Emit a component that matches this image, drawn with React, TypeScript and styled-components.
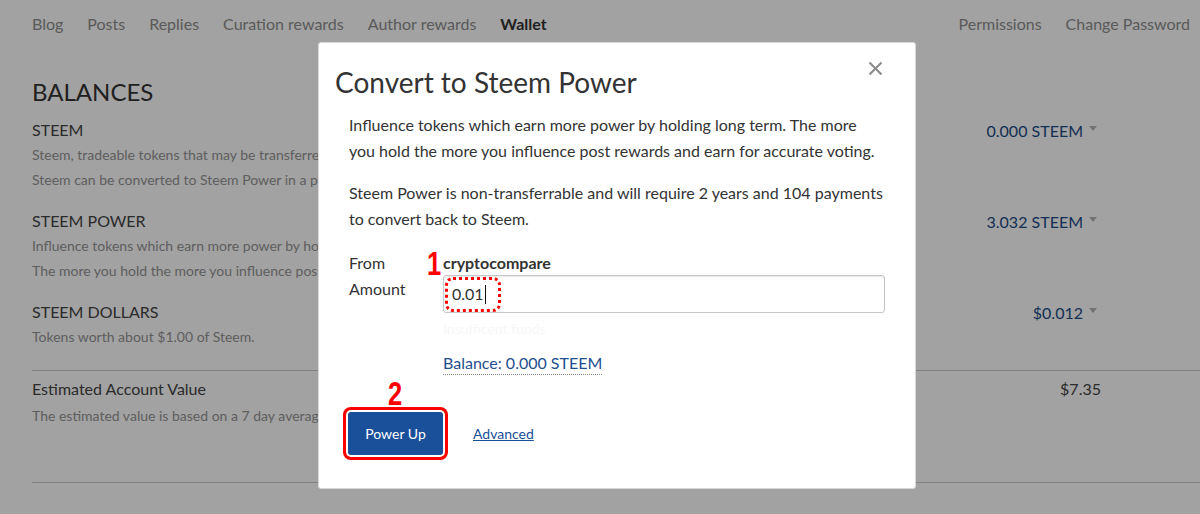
import styled, { createGlobalStyle } from 'styled-components'

const GlobalStyle = createGlobalStyle`
  html, body {
    margin: 0;
    padding: 0;
    background: #fff;
    font-family: Lato, "Open Sans", "Liberation Sans", sans-serif;
    color: #333;
  }
  * { box-sizing: border-box; }
`

interface Balance {
  label: string
  lines: string[]
  value: string
  dropdown: boolean
}

const balances: Balance[] = [
  {
    label: 'STEEM',
    lines: [
      'Steem, tradeable tokens that may be transferred anywhere at anytime.',
      'Steem can be converted to Steem Power in a process called powering up.'
    ],
    value: '0.000 STEEM',
    dropdown: true
  },
  {
    label: 'STEEM POWER',
    lines: [
      'Influence tokens which earn more power by holding long term.',
      'The more you hold the more you influence post rewards and earn for accurate voting.'
    ],
    value: '3.032 STEEM',
    dropdown: true
  },
  {
    label: 'STEEM DOLLARS',
    lines: ['Tokens worth about $1.00 of Steem.'],
    value: '$0.012',
    dropdown: true
  }
]

const leftTabs = ['Blog', 'Posts', 'Replies', 'Curation rewards', 'Author rewards', 'Wallet']
const rightTabs = ['Permissions', 'Change Password']

const App = () => {
  return <>
    <GlobalStyle />
    <Page>
      <Nav>
        <NavGroup>
          {leftTabs.map(t => <NavItem key={t} active={t === 'Wallet'}>{t}</NavItem>)}
        </NavGroup>
        <NavGroup>
          {rightTabs.map(t => <NavItem key={t} active={false}>{t}</NavItem>)}
        </NavGroup>
      </Nav>
      <Section>
        <Heading>BALANCES</Heading>
        {balances.map(b => <BalanceRow key={b.label}>
          <BalanceInfo>
            <BalanceLabel>{b.label}</BalanceLabel>
            {b.lines.map(l => <BalanceDesc key={l}>{l}</BalanceDesc>)}
          </BalanceInfo>
          <BalanceValue>
            <ValueLink>{b.value}</ValueLink>
            {b.dropdown && <Caret />}
          </BalanceValue>
        </BalanceRow>)}
        <EstimateRow>
          <BalanceInfo>
            <EstimateLabel>Estimated Account Value</EstimateLabel>
            <EstimateDesc>The estimated value is based on a 7 day average value of Steem in US dollars.</EstimateDesc>
          </BalanceInfo>
          <EstimateValue>$7.35</EstimateValue>
        </EstimateRow>
      </Section>
    </Page>
    <Overlay />
    <Modal>
      <CloseButton aria-label="Close">
        <svg width="15" height="15" viewBox="0 0 15 15">
          <path d="M1.5 1.5 L13.5 13.5 M13.5 1.5 L1.5 13.5" stroke="#8a8a8a" strokeWidth="2" />
        </svg>
      </CloseButton>
      <Title>Convert to Steem Power</Title>
      <ModalBody>
        <Paragraph>
          Influence tokens which earn more power by holding long term. The more<br />
          you hold the more you influence post rewards and earn for accurate voting.
        </Paragraph>
        <Paragraph>
          Steem Power is non-transferrable and will require 2 years and 104 payments<br />
          to convert back to Steem.
        </Paragraph>
        <FormRow>
          <FieldLabel>From</FieldLabel>
          <FieldValue>
            <Marker top={0} left={-16}>1</Marker>
            <Account>cryptocompare</Account>
          </FieldValue>
        </FormRow>
        <AmountRow>
          <AmountLabel>Amount</AmountLabel>
          <FieldValue>
            <InputBox>
              0.01<InputCaret />
              <DottedMark />
            </InputBox>
            <ErrorText>Insufficent funds</ErrorText>
            <BalanceLink>Balance: 0.000 STEEM</BalanceLink>
          </FieldValue>
        </AmountRow>
        <Actions>
          <ButtonWrap>
            <Marker top={-31} left={40}>2</Marker>
            <PrimaryButton>Power Up</PrimaryButton>
          </ButtonWrap>
          <AdvancedLink>Advanced</AdvancedLink>
        </Actions>
      </ModalBody>
    </Modal>
  </>
}

const Page = styled.div`
  width: 1200px;
  height: 514px;
  overflow: hidden;
`
const Nav = styled.nav`
  display: flex;
  justify-content: space-between;
  align-items: center;
  height: 47px;
  padding: 0 10px 0 32px;
`
const NavGroup = styled.div`
  display: flex;
  gap: 24px;
`
const NavItem = styled.a<{ active: boolean }>`
  font-size: 16px;
  color: ${p => p.active ? '#333' : '#8e8e8e'};
  font-weight: ${p => p.active ? 700 : 400};
`
const Section = styled.section`
  padding-left: 32px;
`
const Heading = styled.h2`
  margin: 31px 0 0;
  font-size: 24px;
  font-weight: 400;
  line-height: 28px;
  color: #333;
`
const BalanceRow = styled.div`
  display: flex;
  padding: 8px 0 9px;
  &:nth-of-type(1) { padding-top: 12px; }
`
const BalanceInfo = styled.div`
  flex: 1;
`
const BalanceLabel = styled.div`
  font-size: 16px;
  line-height: 24px;
  color: #444;
`
const BalanceDesc = styled.div`
  font-size: 14px;
  line-height: 24px;
  color: #959595;
  margin-top: 1px;
`
const BalanceValue = styled.div`
  display: flex;
  align-items: center;
  height: 24px;
  padding-right: 103px;
`
const ValueLink = styled.span`
  font-size: 16px;
  color: #1d4a84;
`
const Caret = styled.span`
  width: 0;
  height: 0;
  margin-left: 6px;
  margin-bottom: 3px;
  border-left: 4px solid transparent;
  border-right: 4px solid transparent;
  border-top: 5px solid #b5b5b5;
`
const EstimateRow = styled.div`
  display: flex;
  border-top: 1px solid #c8c8c8;
  border-bottom: 1px solid #c8c8c8;
  margin-top: 12px;
  padding: 6px 0 54px;
`
const EstimateLabel = styled.div`
  font-size: 16px;
  line-height: 24px;
  color: #444;
`
const EstimateDesc = styled(BalanceDesc)`
  margin-top: 3px;
`
const EstimateValue = styled.div`
  font-size: 16px;
  line-height: 24px;
  color: #444;
  padding-right: 99px;
`
const Overlay = styled.div`
  position: fixed;
  inset: 0;
  background: rgba(0, 0, 0, 0.365);
`
const Modal = styled.div`
  position: fixed;
  top: 42px;
  left: 318px;
  width: 598px;
  height: 447px;
  background: #fff;
  border: 1px solid #d8d8d8;
  border-radius: 3px;
  padding: 22px 16px 16px;
`
const CloseButton = styled.button`
  position: absolute;
  top: 18px;
  right: 32px;
  padding: 0;
  border: none;
  background: none;
  display: flex;
`
const Title = styled.h1`
  margin: 0;
  font-size: 28px;
  line-height: 34px;
  font-weight: 400;
  color: #333;
`
const ModalBody = styled.div`
  padding: 0 14px;
`
const Paragraph = styled.p`
  margin: 13px 0 0;
  font-size: 16px;
  line-height: 26px;
  color: #333;
  & + & { margin-top: 16px; }
`
const FormRow = styled.div`
  display: grid;
  grid-template-columns: 94px 1fr;
  margin-top: 19px;
  font-size: 16px;
  line-height: 24px;
`
const AmountRow = styled(FormRow)`
  margin-top: 0;
`
const FieldLabel = styled.div`
  color: #333;
`
const AmountLabel = styled(FieldLabel)`
  padding-top: 2px;
`
const FieldValue = styled.div`
  position: relative;
`
const Account = styled.span`
  font-weight: 700;
  color: #333;
`
const Marker = styled.span<{ top: number, left: number }>`
  position: absolute;
  top: ${p => p.top}px;
  left: ${p => p.left}px;
  font-family: "Liberation Sans", sans-serif;
  font-weight: 700;
  font-size: 34px;
  line-height: 24px;
  color: #f00;
  transform: scaleX(0.75);
  transform-origin: left top;
`
const InputBox = styled.div`
  position: relative;
  height: 38px;
  display: flex;
  align-items: center;
  padding-left: 8px;
  border: 1px solid #c6c6c6;
  border-radius: 3px;
  box-shadow: inset 0 1px 2px rgba(0, 0, 0, 0.1);
  font-size: 16px;
  color: #333;
`
const InputCaret = styled.span`
  width: 1px;
  height: 19px;
  background: #111;
  margin-left: 1px;
`
const DottedMark = styled.span`
  position: absolute;
  left: 1px;
  top: 1px;
  width: 56px;
  height: 35px;
  border: 3px dotted #f00;
  border-radius: 8px;
`
const ErrorText = styled.div`
  margin-top: 4px;
  font-size: 14px;
  line-height: 24px;
  color: #f7f7f7;
`
const BalanceLink = styled.a`
  display: inline-block;
  margin-top: 10px;
  font-size: 16px;
  line-height: 23px;
  color: #1f4f8f;
  border-bottom: 1px dotted #8a8a8a;
`
const Actions = styled.div`
  display: flex;
  align-items: center;
  gap: 30px;
  margin-top: 37px;
  margin-left: -1px;
`
const ButtonWrap = styled.div`
  position: relative;
`
const PrimaryButton = styled.button`
  width: 95px;
  height: 43px;
  border: none;
  border-radius: 3px;
  background: #1a4f9a;
  color: #fff;
  font-family: Lato, "Open Sans", sans-serif;
  font-size: 14px;
  box-shadow: 0 0 0 2px #fff, 0 0 0 5px #f00;
  display: block;
`
const AdvancedLink = styled.a`
  font-size: 14px;
  color: #1a4f9a;
  text-decoration: underline;
`

export default App
